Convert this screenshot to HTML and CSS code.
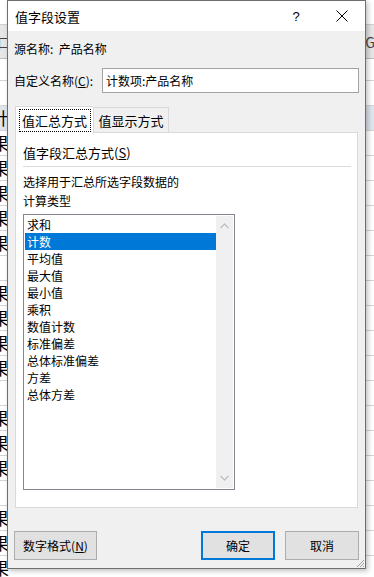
FILE: index.html
```html
<!DOCTYPE html>
<html lang="zh-CN">
<head>
    <meta charset="UTF-8">
    <meta name="viewport" content="width=device-width, initial-scale=1.0">
    <title>值字段设置</title>
    <link rel="stylesheet" href="styles.css">
</head>
<body>
    <!-- spreadsheet behind the dialog -->
    <div class="sheet">
        <div class="sheet-top"></div>
        <div class="sheet-head"><span class="col-l">口</span><span class="col-r">G</span></div>
        <div class="sheet-row first"></div>
        <div class="sheet-row"></div>
        <div class="sheet-row head-cell"><span class="cell">计</span></div>
        <div class="sheet-row"><span class="cell">果</span></div>
        <div class="sheet-row"><span class="cell">果</span></div>
        <div class="sheet-row"><span class="cell">果</span></div>
        <div class="sheet-row"><span class="cell">果</span></div>
        <div class="sheet-row"><span class="cell">果</span></div>
        <div class="sheet-row"></div>
        <div class="sheet-row"><span class="cell">果</span></div>
        <div class="sheet-row"><span class="cell">果</span></div>
        <div class="sheet-row"><span class="cell">果</span></div>
        <div class="sheet-row"><span class="cell">果</span></div>
        <div class="sheet-row"></div>
        <div class="sheet-row"><span class="cell">果</span></div>
        <div class="sheet-row"><span class="cell">果</span></div>
        <div class="sheet-row"><span class="cell">果</span></div>
        <div class="sheet-row"></div>
        <div class="sheet-row"><span class="cell">果</span></div>
        <div class="sheet-row"><span class="cell">果</span></div>
        <div class="sheet-row"><span class="cell">果</span></div>
    </div>

    <div class="dialog">
        <div class="titlebar">
            <span class="title">值字段设置</span>
            <span class="tb-btn help">?</span>
            <span class="tb-btn close">
                <svg width="12" height="12" viewBox="0 0 12 12">
                    <path d="M0.5 0.5 L11.5 11.5 M11.5 0.5 L0.5 11.5" stroke="#000" stroke-width="1" fill="none"/>
                </svg>
            </span>
        </div>

        <div class="body">
            <div class="source">源名称:&nbsp;&nbsp;产品名称</div>

            <div class="name-row">
                <label for="customName">自定义名称(<u>C</u>):</label>
                <input type="text" id="customName" class="name-input" value="计数项:产品名称">
            </div>

            <div class="tabs">
                <div class="tab active"><span class="focus">值汇总方式</span></div>
                <div class="tab">值显示方式</div>
            </div>

            <div class="panel">
                <div class="group-title">值字段汇总方式(<u>S</u>)</div>
                <div class="separator"></div>
                <div class="hint hint-first">选择用于汇总所选字段数据的</div>
                <div class="hint">计算类型</div>

                <div class="listbox">
                    <ul class="items">
                        <li>求和</li>
                        <li class="selected">计数</li>
                        <li>平均值</li>
                        <li>最大值</li>
                        <li>最小值</li>
                        <li>乘积</li>
                        <li>数值计数</li>
                        <li>标准偏差</li>
                        <li>总体标准偏差</li>
                        <li>方差</li>
                        <li>总体方差</li>
                    </ul>
                    <div class="scrollbar">
                        <svg width="9" height="6" viewBox="0 0 9 6">
                            <path d="M0.5 5 L4.5 1 L8.5 5" stroke="#c2c2c2" stroke-width="1.4" fill="none"/>
                        </svg>
                        <svg width="9" height="6" viewBox="0 0 9 6">
                            <path d="M0.5 1 L4.5 5 L8.5 1" stroke="#c2c2c2" stroke-width="1.4" fill="none"/>
                        </svg>
                    </div>
                </div>
            </div>

            <div class="buttons">
                <button class="btn btn-format">数字格式(<u>N</u>)</button>
                <span class="spacer"></span>
                <button class="btn btn-ok">确定</button>
                <button class="btn btn-cancel">取消</button>
            </div>
        </div>

        <svg class="grip" width="9" height="9" viewBox="0 0 9 9">
            <path d="M8 1 L1 8 M8 4 L4 8 M8 7 L7 8" stroke="#a0a0a0" stroke-width="1" fill="none"/>
        </svg>
    </div>
</body>
</html>
```

FILE: styles.css
```css
body {
    margin: 0;
    padding: 0;
    width: 374px;
    height: 577px;
    overflow: hidden;
    position: relative;
    background-color: #fff;
    font-family: "Noto Sans CJK SC", "Noto Sans", sans-serif;
    font-size: 12px;
    color: #000;
}

/* spreadsheet background */
.sheet {
    width: 374px;
}
.sheet-top {
    height: 24px;
    background-color: #fff;
}
.sheet-head {
    height: 33px;
    background-color: #e6e6e6;
    border-top: 1px solid #d0d0d0;
    border-bottom: 1px solid #bdbdbd;
    display: flex;
    align-items: center;
    justify-content: space-between;
    font-size: 14px;
    color: #444;
}
.col-l {
    margin-left: -3px;
}
.col-r {
    margin-right: -1px;
}
.sheet-row {
    height: 24px;
    border-bottom: 1px solid #d4d4d4;
    display: flex;
    align-items: center;
}
.sheet-row.first {
    height: 21px;
}
.sheet-row.head-cell {
    background-color: #dfe5ec;
}
.cell {
    margin-left: -8px;
    font-size: 17px;
    line-height: 24px;
}

/* dialog */
.dialog {
    position: absolute;
    left: 7px;
    top: 0;
    width: 357px;
    height: 567px;
    border: 1px solid #6e6e6e;
    background-color: #f0f0f0;
    box-shadow: 2px 2px 5px rgba(0, 0, 0, 0.25);
    display: flex;
    flex-direction: column;
}
.titlebar {
    height: 30px;
    background-color: #fff;
    display: flex;
    align-items: center;
}
.title {
    flex: 1;
    padding-left: 7px;
    font-size: 13px;
}
.tb-btn {
    width: 46px;
    height: 30px;
    display: flex;
    align-items: center;
    justify-content: center;
}
.help {
    font-size: 13px;
    font-family: "Liberation Sans", sans-serif;
}
.body {
    flex: 1;
    padding: 0 6px 0 6px;
    display: flex;
    flex-direction: column;
}
.source {
    margin-top: 9px;
    height: 18px;
    line-height: 18px;
}
.name-row {
    margin-top: 10px;
    height: 25px;
    display: flex;
    align-items: center;
}
.name-row label {
    width: 88px;
}
.name-input {
    flex: 1;
    margin: 0;
    height: 25px;
    box-sizing: border-box;
    border: 1px solid #a3a3a3;
    padding: 0 3px;
    font-family: inherit;
    font-size: 12px;
    color: #000;
    background-color: #fff;
    outline: none;
}

/* tabs */
.tabs {
    margin-top: 13px;
    margin-left: 1px;
    display: flex;
    align-items: flex-end;
    height: 26px;
    flex-shrink: 0;
}
.tab {
    width: 74px;
    height: 24px;
    box-sizing: content-box;
    border: 1px solid #d9d9d9;
    border-bottom: none;
    background-color: #f0f0f0;
    display: flex;
    align-items: center;
    justify-content: center;
    font-size: 13px;
}
.tab.active {
    width: 77px;
    height: 26px;
    border-right: none;
    background-color: #fff;
    position: relative;
    top: 1px;
    z-index: 1;
}
.focus {
    display: flex;
    align-items: center;
    justify-content: center;
    width: 70px;
    height: 21px;
    outline: 1px dotted #000;
}
.panel {
    margin: 0 1px 0 1px;
    height: 376px;
    box-sizing: border-box;
    flex-shrink: 0;
    border: 1px solid #d9d9d9;
    background-color: #fff;
    padding: 11px 6px 0 7px;
}
.group-title {
    height: 18px;
    line-height: 18px;
    font-size: 13px;
}
.separator {
    margin-top: 4px;
    height: 1px;
    background-color: #dcdcdc;
}
.hint {
    height: 19px;
    line-height: 19px;
}
.hint-first {
    margin-top: 5px;
}
.listbox {
    margin-top: 4px;
    width: 212px;
    height: 276px;
    box-sizing: border-box;
    border: 1px solid #828790;
    display: flex;
    padding: 1px;
}
.items {
    flex: 1;
    list-style: none;
    margin: 0;
    padding: 0;
}
.items li {
    height: 17px;
    line-height: 17px;
    padding-left: 2px;
}
.items li.selected {
    background-color: #0078d7;
    color: #fff;
}
.scrollbar {
    width: 17px;
    background-color: #f0f0f0;
    display: flex;
    flex-direction: column;
    align-items: center;
    justify-content: space-between;
    padding: 7px 0 7px 0;
}

/* bottom buttons */
.buttons {
    margin-top: 23px;
    display: flex;
}
.spacer {
    flex: 1;
}
.btn {
    height: 29px;
    box-sizing: border-box;
    border: 1px solid #adadad;
    background-color: #e1e1e1;
    font-family: inherit;
    font-size: 12px;
    color: #000;
    padding: 0;
}
.btn-format {
    width: 83px;
}
.btn-ok {
    width: 74px;
    border: 2px solid #0078d7;
    margin-right: 10px;
}
.btn-cancel {
    width: 74px;
}
.grip {
    position: absolute;
    right: 0;
    bottom: 0;
}
```
